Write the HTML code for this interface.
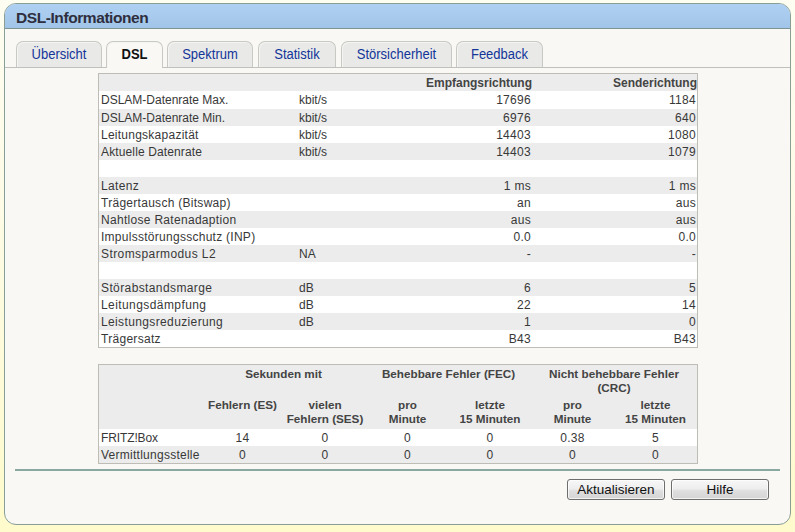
<!DOCTYPE html>
<html><head><meta charset="utf-8">
<style>
*{margin:0;padding:0;box-sizing:border-box}
html,body{width:795px;height:532px;overflow:hidden;background:linear-gradient(#fdfdf1,#fefbe6 40%,#fffbcc);font-family:"Liberation Sans",sans-serif}
#panel{position:absolute;left:4px;top:3px;width:787px;height:522px;border:1px solid #8a9e96;border-radius:12px;box-shadow:inset 1px 0 0 #f6fbfa;background:#f9f8f4;overflow:hidden}
#hdr{position:absolute;left:0;top:0;width:785px;height:25px;background:linear-gradient(#aed1f3,#a1c5e8);border-bottom:1px solid #7e9494}
#hdr span{position:absolute;left:11px;top:5px;font-weight:bold;font-size:15.5px;color:#2e2e3e;letter-spacing:-0.42px}
.tab{position:absolute;top:37px;height:26px;border:1px solid #c8c8c4;border-bottom:none;border-radius:7px 7px 0 0;background:#e9e9e7;box-shadow:inset 1px 1px 0 #f4f4f2;color:#12359a;font-size:13px;text-align:center;line-height:26.5px}
.tab span{display:inline-block;transform:scaleY(1.1);transform-origin:50% 70%}
.tab.act{background:#f9f8f4;color:#111;font-weight:bold;height:27px}
#tabline{position:absolute;left:0;top:63px;width:785px;height:1px;background:#c0c0bc}
table{position:absolute;border-collapse:separate;border-spacing:0;font-size:12px;color:#383838}
#t1{left:93px;top:69px;width:600px;border:1px solid #bdbdb5}
#t1 td{height:17px;padding:1px 2px 0 2px;white-space:nowrap;line-height:16px}
#t1 tr:nth-child(odd) td{background:#ececec}
#t1 tr:nth-child(even) td{background:#fff}
#t1 tr.r1 td{height:18px;padding-bottom:1px}
#t1 th{height:17px;background:#ececec;font-weight:bold;font-size:12px;text-align:right;padding:0 1px 0 0;color:#444}
#t1 td.r{text-align:right;letter-spacing:0.3px;padding-right:2px}
#t1 td.r:last-child{padding-right:1px}
#t1 th:last-child{padding-right:0}
#t2{left:93px;top:360px;width:600px;border:1px solid #bdbdb5}
#t2 th{background:#ececec;font-weight:bold;font-size:11.7px;color:#444;text-align:center;vertical-align:top;line-height:14px;padding:0}
#t2 td{height:17px;text-align:center;line-height:14px;padding:0;letter-spacing:0.3px}
#t2 td.l{text-align:left;padding-left:2px}
#t2 tr.w td{background:#fff}
#t2 tr.g td{background:#ececec}
#line{position:absolute;left:10px;top:465px;width:765px;height:2px;background:#88a8a0}
.btn{position:absolute;top:475px;width:98px;height:21px;border:1px solid #6e6e6e;border-radius:3px;background:linear-gradient(#f7f7f7,#eeeeee 45%,#dedede 58%,#d5d5d5);box-shadow:inset 0 0 0 1px rgba(255,255,255,0.7);font-size:13.5px;color:#111;text-align:center;line-height:19px}
</style></head><body>
<div id="panel">
  <div id="hdr"><span>DSL-Informationen</span></div>
  <div id="tabline"></div>
  <div class="tab" style="left:11px;width:86px"><span>Übersicht</span></div>
  <div class="tab act" style="left:101px;width:57px"><span>DSL</span></div>
  <div class="tab" style="left:162px;width:86px"><span>Spektrum</span></div>
  <div class="tab" style="left:253px;width:78px"><span>Statistik</span></div>
  <div class="tab" style="left:336px;width:111px"><span>Störsicherheit</span></div>
  <div class="tab" style="left:451px;width:87px"><span>Feedback</span></div>

  <table id="t1">
    <colgroup><col style="width:198px"><col style="width:100px"><col style="width:136px"><col></colgroup>
    <tr><th></th><th></th><th>Empfangsrichtung</th><th>Senderichtung</th></tr>
    <tr class="r1"><td>DSLAM-Datenrate Max.</td><td>kbit/s</td><td class="r">17696</td><td class="r">1184</td></tr>
    <tr><td>DSLAM-Datenrate Min.</td><td>kbit/s</td><td class="r">6976</td><td class="r">640</td></tr>
    <tr><td style="letter-spacing:0.25px">Leitungskapazität</td><td>kbit/s</td><td class="r">14403</td><td class="r">1080</td></tr>
    <tr><td style="letter-spacing:0.13px">Aktuelle Datenrate</td><td>kbit/s</td><td class="r">14403</td><td class="r">1079</td></tr>
    <tr><td></td><td></td><td></td><td></td></tr>
    <tr><td style="letter-spacing:0.32px">Latenz</td><td></td><td class="r">1 ms</td><td class="r">1 ms</td></tr>
    <tr><td style="letter-spacing:0.28px">Trägertausch (Bitswap)</td><td></td><td class="r">an</td><td class="r">aus</td></tr>
    <tr><td style="letter-spacing:0.3px">Nahtlose Ratenadaption</td><td></td><td class="r">aus</td><td class="r">aus</td></tr>
    <tr><td style="letter-spacing:0.27px">Impulsstörungsschutz (INP)</td><td></td><td class="r">0.0</td><td class="r">0.0</td></tr>
    <tr><td style="letter-spacing:0.41px">Stromsparmodus L2</td><td>NA</td><td class="r">-</td><td class="r">-</td></tr>
    <tr><td></td><td></td><td></td><td></td></tr>
    <tr><td style="letter-spacing:0.39px">Störabstandsmarge</td><td>dB</td><td class="r">6</td><td class="r">5</td></tr>
    <tr><td style="letter-spacing:0.42px">Leitungsdämpfung</td><td>dB</td><td class="r">22</td><td class="r">14</td></tr>
    <tr><td style="letter-spacing:0.37px">Leistungsreduzierung</td><td>dB</td><td class="r">1</td><td class="r">0</td></tr>
    <tr><td style="letter-spacing:0.29px">Trägersatz</td><td></td><td class="r">B43</td><td class="r">B43</td></tr>
  </table>

  <table id="t2">
    <colgroup><col style="width:102px"><col style="width:83px"><col style="width:82px"><col style="width:83px"><col style="width:82px"><col style="width:83px"><col></colgroup>
    <tr><th rowspan="2" style="height:64px"></th><th colspan="2" style="height:33px;padding-top:2px">Sekunden mit</th><th colspan="2" style="padding-top:2px">Behebbare Fehler (FEC)</th><th colspan="2" style="padding-top:2px">Nicht behebbare Fehler<br>(CRC)</th></tr>
    <tr><th>Fehlern (ES)</th><th>vielen<br>Fehlern (SES)</th><th>pro<br>Minute</th><th>letzte<br>15 Minuten</th><th>pro<br>Minute</th><th>letzte<br>15 Minuten</th></tr>
    <tr class="w"><td class="l" style="letter-spacing:-0.12px">FRITZ!Box</td><td>14</td><td>0</td><td>0</td><td>0</td><td>0.38</td><td>5</td></tr>
    <tr class="g"><td class="l" style="letter-spacing:0.26px">Vermittlungsstelle</td><td>0</td><td>0</td><td>0</td><td>0</td><td>0</td><td>0</td></tr>
  </table>

  <div id="line"></div>
  <div class="btn" style="left:562px">Aktualisieren</div>
  <div class="btn" style="left:666px">Hilfe</div>
</div>
</body></html>
